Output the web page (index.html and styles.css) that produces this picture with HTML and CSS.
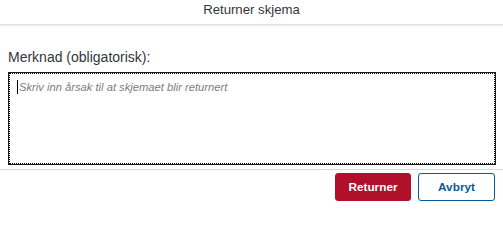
FILE: index.html
```html
<!DOCTYPE html>
<html>
<head>
<meta charset="utf-8">
<link rel="stylesheet" href="styles.css">
</head>
<body>
<div class="dialog">
  <header class="header">Returner skjema</header>
  <main class="content">
    <label class="label">Merknad (obligatorisk):</label>
    <div class="area"><span class="caret"></span><span class="ph">Skriv inn årsak til at skjemaet blir returnert</span></div>
  </main>
  <footer class="footer">
    <button class="btn primary">Returner</button>
    <button class="btn secondary">Avbryt</button>
  </footer>
</div>
</body>
</html>
```
FILE: styles.css
```css
html, body { margin: 0; padding: 0; background: #fff; }
body { font-family: "Liberation Sans", Arial, sans-serif; color: #32363a; }
.dialog { width: 503px; height: 202px; display: flex; flex-direction: column; }
.header {
  height: 24px; line-height: 20px; text-align: center; font-size: 13.2px;
  color: #32363a; border-bottom: 1px solid #e0e0e0;
  box-shadow: 0 1px 2px rgba(0,0,0,0.08);
}
.content { padding: 24px 7px 0 8px; display: flex; flex-direction: column; }
.label { font-size: 14px; line-height: 16px; height: 16px; margin-bottom: 7px; color: #32363a; }
.area {
  box-sizing: border-box; height: 93px; border: 1px solid #1a1a1a;
  outline: 1px dotted #000; outline-offset: -2px;
  padding: 7px 8px; display: flex; align-items: flex-start;
}
.caret { width: 1px; height: 14px; background: #000; margin-right: 1px; margin-top: 0; }
.ph { font-style: italic; font-size: 11.2px; line-height: 14px; color: #7a7d80; }
.footer {
  margin-top: 4px; border-top: 1px solid #d9d9d9; padding: 3px 8px 0 0;
  display: flex; justify-content: flex-end; gap: 7px;
}
.btn {
  box-sizing: border-box; height: 28px; border-radius: 3px; font-family: "Liberation Sans", Arial, sans-serif;
  font-size: 11.8px; font-weight: bold; padding: 0; cursor: pointer;
}
.primary { width: 76px; background: #b0102a; color: #fff; border: 1px solid #b0102a; }
.secondary { width: 77px; background: #fff; color: #0a5a9c; border: 1px solid #0a5a9c; }
```
